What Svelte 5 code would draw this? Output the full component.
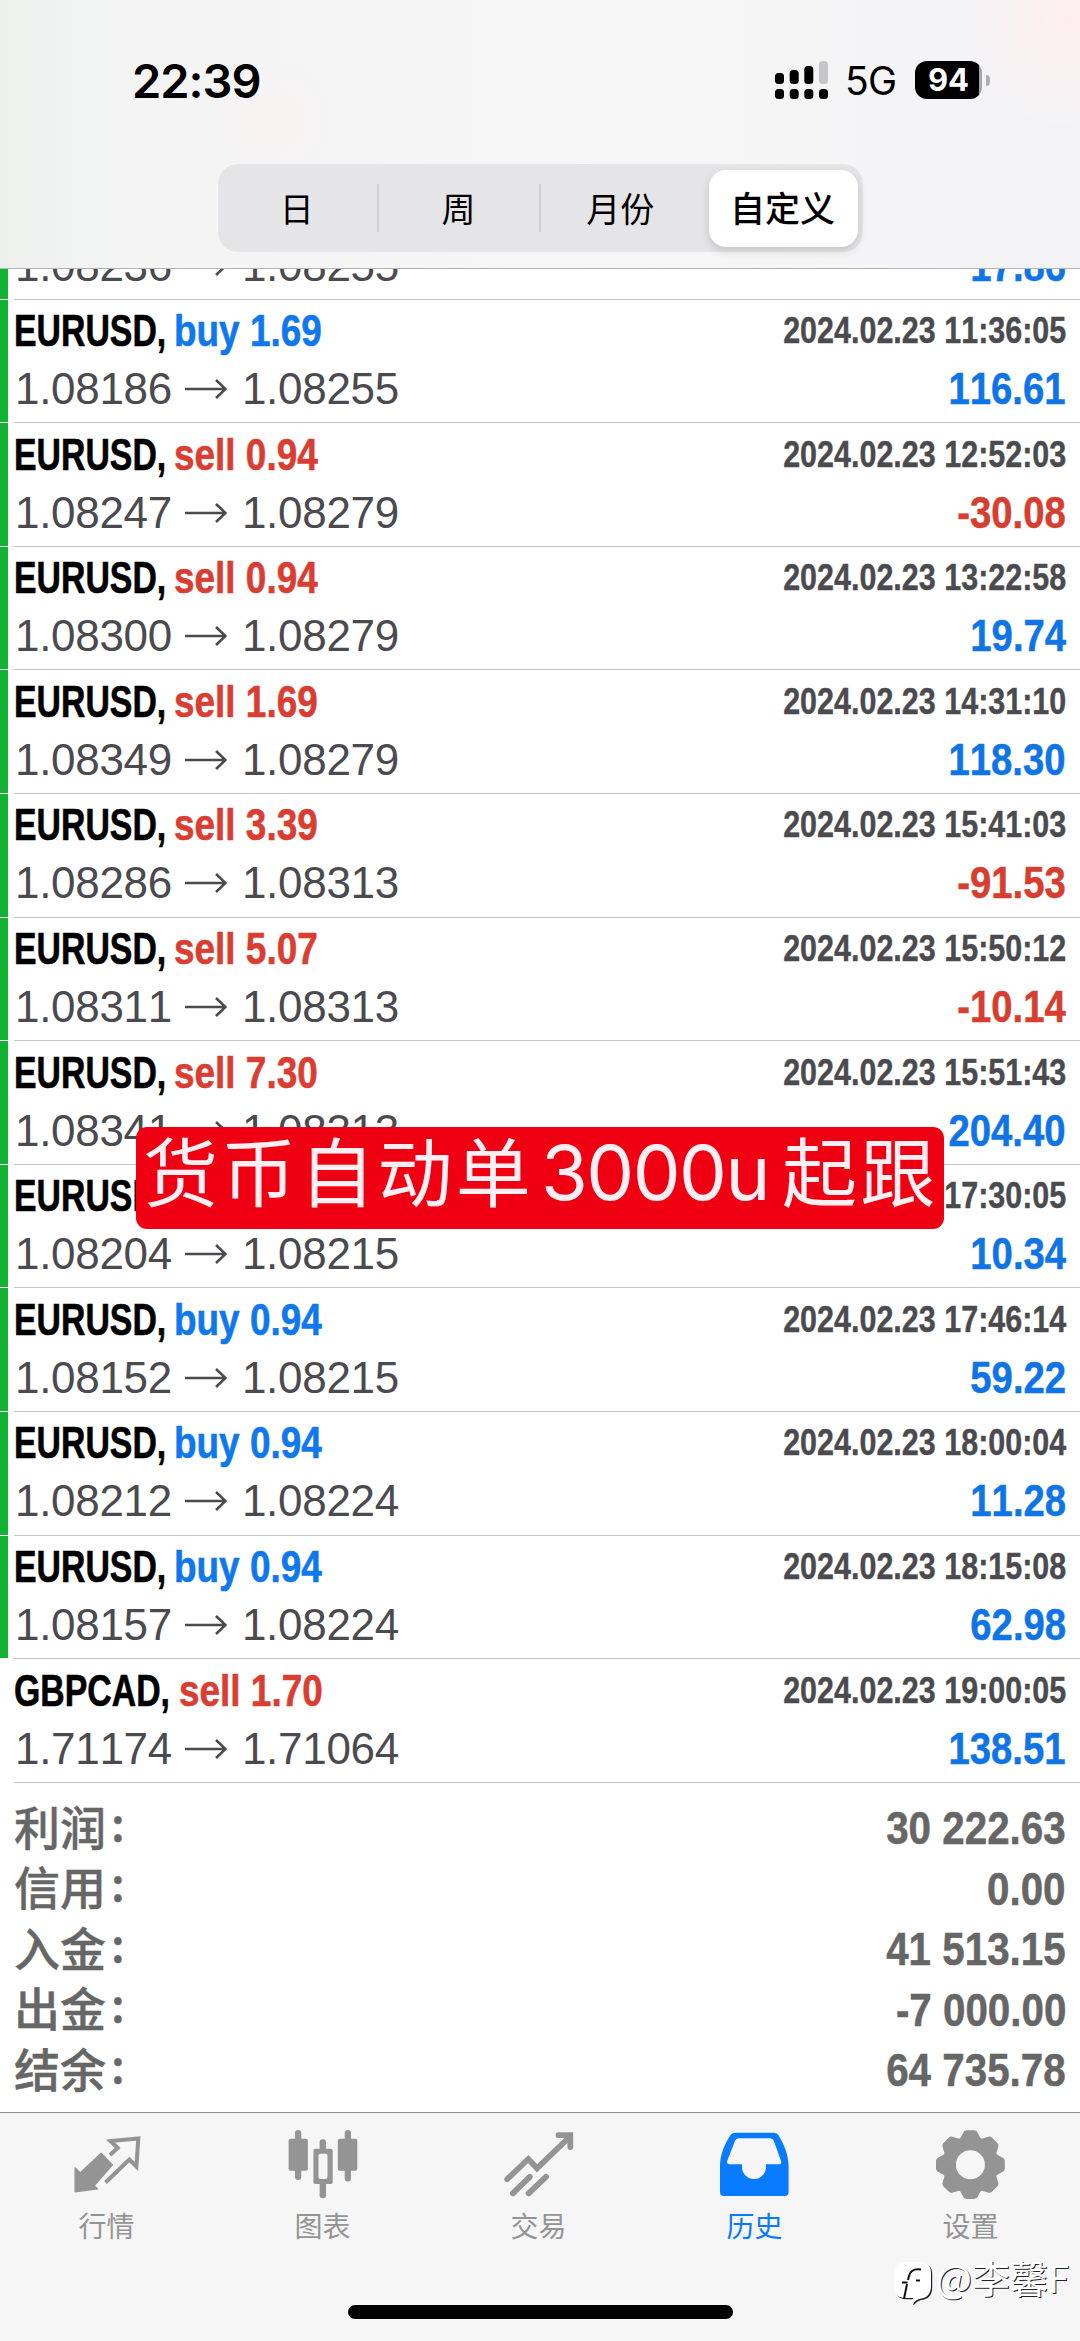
<script lang="ts">
	type Deal = {
		symbol: string;
		side: 'buy' | 'sell';
		volume: string;
		open: string;
		close: string;
		time: string;
		profit: string;
		marked?: boolean;
	};

	const periods = ['日', '周', '月份', '自定义'];
	let period = $state('自定义');

	function deal(
		symbol: string,
		side: 'buy' | 'sell',
		volume: string,
		open: string,
		close: string,
		time: string,
		profit: string,
		marked = true
	): Deal {
		return { symbol, side, volume, open, close, time: '2024.02.23 ' + time, profit, marked };
	}

	// scrolled halfway under the header, only its second line shows
	const clipped = { open: '1.08236', close: '1.08255', profit: '17.86' };

	const deals: Deal[] = [
		deal('EURUSD', 'buy', '1.69', '1.08186', '1.08255', '11:36:05', '116.61'),
		deal('EURUSD', 'sell', '0.94', '1.08247', '1.08279', '12:52:03', '-30.08'),
		deal('EURUSD', 'sell', '0.94', '1.08300', '1.08279', '13:22:58', '19.74'),
		deal('EURUSD', 'sell', '1.69', '1.08349', '1.08279', '14:31:10', '118.30'),
		deal('EURUSD', 'sell', '3.39', '1.08286', '1.08313', '15:41:03', '-91.53'),
		deal('EURUSD', 'sell', '5.07', '1.08311', '1.08313', '15:50:12', '-10.14'),
		deal('EURUSD', 'sell', '7.30', '1.08341', '1.08313', '15:51:43', '204.40'),
		deal('EURUSD', 'buy', '0.94', '1.08204', '1.08215', '17:30:05', '10.34'),
		deal('EURUSD', 'buy', '0.94', '1.08152', '1.08215', '17:46:14', '59.22'),
		deal('EURUSD', 'buy', '0.94', '1.08212', '1.08224', '18:00:04', '11.28'),
		deal('EURUSD', 'buy', '0.94', '1.08157', '1.08224', '18:15:08', '62.98'),
		deal('GBPCAD', 'sell', '1.70', '1.71174', '1.71064', '19:00:05', '138.51', false)
	];

	const summary = [
		{ label: '利润', value: '30 222.63' },
		{ label: '信用', value: '0.00' },
		{ label: '入金', value: '41 513.15' },
		{ label: '出金', value: '-7 000.00' },
		{ label: '结余', value: '64 735.78' }
	];

	const tabs = [
		{ id: 'quotes', label: '行情' },
		{ id: 'chart', label: '图表' },
		{ id: 'trade', label: '交易' },
		{ id: 'history', label: '历史' },
		{ id: 'settings', label: '设置' }
	];
	let activeTab = $state('history');

	const teeth = [0, 45, 90, 135, 180, 225, 270, 315];
</script>

{#snippet result(open: string, close: string, profit: string)}
	<div class="line">
		<div class="prices">
			<span>{open}</span>
			<svg width="42" height="20" viewBox="0 0 42 20">
				<path d="M0 10H40.5M31 1L40.5 10L31 19" />
			</svg>
			<span>{close}</span>
		</div>
		<span class="profit" class:loss={profit.startsWith('-')}>{profit}</span>
	</div>
{/snippet}

<main>
	<header>
		<div class="status">
			<span class="clock">22:39</span>
			<div class="status-right">
				<svg class="signal" width="54" height="38" viewBox="0 0 54 38">
					<rect x="0" y="12" width="9" height="11" rx="3.5" />
					<rect x="14.7" y="9" width="9" height="14" rx="3.5" />
					<rect x="29.3" y="5" width="9" height="18" rx="3.5" />
					<rect class="off" x="44" y="0" width="9" height="23" rx="3.5" />
					<rect x="0" y="28" width="9" height="10" rx="3.5" />
					<rect x="14.7" y="28" width="9" height="10" rx="3.5" />
					<rect x="29.3" y="28" width="9" height="10" rx="3.5" />
					<rect x="44" y="28" width="9" height="10" rx="3.5" />
				</svg>
				<span class="network">5G</span>
				<div class="battery"><span>94</span></div>
				<div class="battery-cap"></div>
			</div>
		</div>
		<div class="segmented">
			{#each periods as p (p)}
				<button class:selected={p === period} onclick={() => (period = p)}>{p}</button>
			{/each}
		</div>
	</header>

	<section class="deals">
		<article class="deal partial marked">
			{@render result(clipped.open, clipped.close, clipped.profit)}
		</article>
		{#each deals as d (d.time)}
			<article class="deal" class:marked={d.marked}>
				<div class="line">
					<div class="title">
						<span class="symbol">{d.symbol},</span>
						<span class="order {d.side}">{d.side} {d.volume}</span>
					</div>
					<span class="time">{d.time}</span>
				</div>
				{@render result(d.open, d.close, d.profit)}
			</article>
		{/each}
	</section>

	<section class="summary">
		{#each summary as row (row.label)}
			<div class="summary-row">
				<span class="label">{row.label}<i>:</i></span>
				<span class="amount">{row.value}</span>
			</div>
		{/each}
	</section>

	<nav>
		{#each tabs as tab (tab.id)}
			<button class="tab" class:active={tab.id === activeTab} onclick={() => (activeTab = tab.id)}>
				<svg width="72" height="72" viewBox="0 0 72 72">
					{#if tab.id === 'quotes'}
						<path
							class="fill round"
							d="M3.2 38L3.2 61.8L25.5 58.8L22 55.7L40.2 35L29.2 23.2L8.2 43Z"
						/>
						<path class="stroke" d="M38 25L45.7 18L38.5 11L66.3 8.4L64.4 36.5L57.3 29.5L33.5 52.5" />
					{:else if tab.id === 'chart'}
						<rect class="fill" x="0.6" y="8.7" width="19.3" height="32" rx="2" />
						<rect class="fill" x="7" y="0" width="6.3" height="50" rx="3" />
						<rect class="fill" x="49.8" y="8.7" width="19.5" height="32" rx="2" />
						<rect class="fill" x="56.7" y="0" width="6.3" height="51.5" rx="3" />
						<rect class="fill" x="31.6" y="9.3" width="6.4" height="13" rx="3" />
						<rect class="fill" x="31.6" y="50" width="6.4" height="18.3" rx="3" />
						<path
							class="fill"
							fill-rule="evenodd"
							d="M27.4 18.7H42.7Q44.7 18.7 44.7 20.7V52Q44.7 54 42.7 54H27.4Q25.4 54 25.4 52V20.7Q25.4 18.7 27.4 18.7ZM32.5 23.7Q30.5 23.7 30.5 25.7V47Q30.5 49 32.5 49H37.5Q39.5 49 39.5 47V25.7Q39.5 23.7 37.5 23.7Z"
						/>
					{:else if tab.id === 'trade'}
						<path
							class="stroke thick"
							d="M3.2 49.2L24.3 29L33 38.3L66 6.5M54.5 5.2H66.3V17M8.8 63.3L25.8 46.8M24.6 63.3L42 46.8"
						/>
					{:else if tab.id === 'history'}
						<path
							class="fill"
							fill-rule="evenodd"
							d="M14.5 2.7H54.5Q57 2.7 58.5 5.2C64 14 68.6 25 68.6 36V62Q68.6 66 64.6 66H4Q0 66 0 62V36C0 25 4.5 14 10.3 5.2Q12 2.7 14.5 2.7ZM18.5 8.3Q16 8.3 15 10.8L7.2 31Q6.3 34.3 9.5 34.3H22V37A12 12 0 0 0 46 37V34.3H59Q62 34.3 61 31L53.8 10.8Q53 8.3 50.2 8.3Z"
						/>
					{:else}
						<g transform="translate(34.4 34.7)">
							{#each teeth as angle (angle)}
								<path
									class="fill"
									transform="rotate({angle})"
									d="M-12 -24Q-9 -28 -7.5 -31.5Q-6.5 -34.4 -4 -34.4H4Q6.5 -34.4 7.5 -31.5Q9 -28 12 -24Z"
								/>
							{/each}
							<circle class="ring" r="21.2" />
						</g>
					{/if}
				</svg>
				<span>{tab.label}</span>
			</button>
		{/each}
	</nav>

	<div class="banner">
		<span>货币自动单</span><span class="latin">3000u</span><span>起跟</span>
	</div>
	<div class="home-indicator"></div>
	<div class="watermark">
		<svg width="42" height="46" viewBox="0 0 42 46">
			<path
				class="shade"
				d="M13 1H27Q38 1 38 12V25Q38 37 26 38Q23 39 19 43L20 37H13Q1 37 1 26V12Q1 1 13 1Z"
				transform="translate(1.2 1.2)"
			/>
			<path
				class="body"
				d="M13 1H27Q38 1 38 12V25Q38 37 26 38Q23 39 19 43L20 37H13Q1 37 1 26V12Q1 1 13 1Z"
			/>
			<path class="curve" d="M28 8.5Q18 7 16 15L15 19M9 21.5H14.5M23 19.5H27M14 23L11 38" />
		</svg>
		<span>@李馨F</span>
	</div>
</main>

<style>
	:global(body) {
		margin: 0;
		background: #fff;
	}

	main {
		position: relative;
		display: flex;
		flex-direction: column;
		width: 1080px;
		height: 2341px;
		overflow: hidden;
		background: #fff;
		font-family: 'Liberation Sans', 'Noto Sans CJK SC', sans-serif;
		font-kerning: none;
	}

	button {
		padding: 0;
		border: 0;
		background: none;
		font-family: 'Noto Sans CJK SC', sans-serif;
		color: inherit;
	}

	header {
		flex: none;
		box-sizing: border-box;
		height: 269px;
		border-bottom: 1px solid #b4b4b6;
		background:
			radial-gradient(circle at 1070px 20px, #fdeeee 0, transparent 110px),
			radial-gradient(circle at 275px 120px, #f8f2f2 0, transparent 60px),
			linear-gradient(90deg, #eef0ee 0, #f4f4f5 12%, #f6f6f6 60%, #f3f3f6 100%);
	}

	.status {
		display: flex;
		justify-content: space-between;
		align-items: center;
		height: 160px;
		padding: 0 90px 0 132px;
		box-sizing: border-box;
		font-family: Inter, sans-serif;
	}

	.clock {
		font-size: 47px;
		font-weight: 600;
		letter-spacing: -1px;
	}

	.status-right {
		display: flex;
		align-items: center;
	}

	.signal .off {
		fill: #c6c6c8;
	}

	.network {
		margin-left: 16px;
		width: 70px;
		font-size: 39px;
		line-height: 42px;
		letter-spacing: -0.8px;
		transform: translateY(1px);
	}

	.battery {
		width: 67px;
		height: 38px;
		border-radius: 12px;
		background: linear-gradient(90deg, #000 64px, #a5a5a7 64px);
		color: #fff;
		font-size: 31px;
		font-weight: 700;
		line-height: 38px;
		text-align: center;
	}

	.battery-cap {
		width: 4px;
		height: 11px;
		margin-left: 4px;
		border-radius: 0 5px 5px 0;
		background: #b0b0b2;
	}

	.segmented {
		display: flex;
		align-items: center;
		width: 645px;
		height: 88px;
		margin: 4px auto 0;
		border-radius: 20px;
		background: #e5e5e7;
	}

	.segmented button {
		flex: 1;
		height: 48px;
		padding-right: 1px;
		font-size: 34px;
		line-height: 44px;
	}

	.segmented button + button {
		border-left: 2px solid #cfcfd2;
	}

	.segmented .selected,
	.segmented button + .selected {
		flex: none;
		width: 149px;
		height: 77px;
		margin: 0 5px 0 8px;
		padding-bottom: 3px;
		border: 0;
		border-radius: 17px;
		background: #fff;
		box-shadow: 0 4px 10px rgb(0 0 0 / 0.14);
		font-size: 35px;
		font-weight: 500;
	}

	.deals {
		flex: none;
		display: flex;
		flex-direction: column;
		height: 1514px;
		overflow: hidden;
	}

	.deal {
		flex: none;
		position: relative;
		box-sizing: border-box;
		display: flex;
		flex-direction: column;
		gap: 8px;
		height: 123.62px;
		padding: 6.5px 14px 0 15px;
	}

	.deal::after {
		content: '';
		position: absolute;
		right: 0;
		bottom: 0;
		left: 14px;
		height: 1px;
		background: #c4c4c6;
	}

	.partial {
		justify-content: flex-end;
		height: 30.5px;
		padding-bottom: 9px;
	}

	.marked::before {
		content: '';
		position: absolute;
		top: 0;
		bottom: 1px;
		left: 0;
		width: 8px;
		background: #12b232;
	}

	.line {
		flex: none;
		display: flex;
		justify-content: space-between;
		height: 50px;
		line-height: 50px;
		white-space: nowrap;
	}

	.title {
		display: flex;
		font-size: 44.5px;
		font-weight: 700;
		-webkit-text-stroke: 0.6px currentColor;
	}

	.symbol {
		margin-left: -1px;
		margin-right: -0.895em;
		transform: scaleX(0.76);
		transform-origin: left;
	}

	.order {
		transform: scaleX(0.83);
		transform-origin: left;
	}

	.buy {
		color: #0f78ec;
	}

	.sell {
		color: #da3d31;
	}

	.time {
		color: #4b4b4f;
		font-size: 36px;
		font-weight: 700;
		transform: scaleX(0.847);
		transform-origin: right;
		-webkit-text-stroke: 0.4px currentColor;
	}

	.prices {
		display: flex;
		align-items: center;
		color: #4b4b4f;
		font-size: 44px;
		letter-spacing: -0.3px;
	}

	.prices svg {
		margin: 0 15px 0 13px;
		fill: none;
		stroke: #4b4b4f;
		stroke-width: 2.6;
	}

	.profit {
		color: #0f74e6;
		font-size: 44px;
		font-weight: 700;
		transform: scaleX(0.87);
		transform-origin: right;
		-webkit-text-stroke: 0.5px currentColor;
	}

	.loss {
		color: #d63e30;
	}

	.summary {
		flex: 1;
		padding: 15px 14px 0 14px;
		color: #666;
	}

	.summary-row {
		display: flex;
		justify-content: space-between;
		height: 60.5px;
		line-height: 60.5px;
	}

	.label {
		margin-top: -3.5px;
		font-family: 'Noto Sans CJK SC', sans-serif;
		font-size: 46px;
		font-weight: 500;
		-webkit-text-stroke: 0.4px currentColor;
	}

	.label i {
		position: relative;
		top: -4px;
		margin-left: 5px;
		font-style: normal;
	}

	.amount {
		font-size: 46px;
		font-weight: 700;
		transform: scaleX(0.877);
		transform-origin: right;
		-webkit-text-stroke: 0.5px currentColor;
	}

	nav {
		flex: none;
		display: flex;
		box-sizing: border-box;
		height: 229px;
		padding-top: 17px;
		border-top: 1px solid #8f8f92;
		background: #f6f6f6;
	}

	.tab {
		flex: 1;
		display: flex;
		flex-direction: column;
		align-items: center;
		color: #949494;
		font-size: 28px;
		line-height: 40px;
	}

	.tab span {
		margin: 3px 3px 0 0;
	}

	.tab.active {
		color: #087bfe;
	}

	.fill {
		fill: currentColor;
	}

	.round {
		stroke: currentColor;
		stroke-width: 1.5;
		stroke-linejoin: round;
	}

	.stroke {
		fill: none;
		stroke: currentColor;
		stroke-width: 4;
	}

	.thick {
		stroke-width: 5.8;
		stroke-linecap: round;
	}

	.ring {
		fill: #f6f6f6;
		stroke: currentColor;
		stroke-width: 13.4;
	}

	.banner {
		position: absolute;
		top: 1127px;
		left: 136px;
		display: flex;
		box-sizing: border-box;
		width: 808px;
		height: 102px;
		padding-left: 7px;
		border-radius: 11px;
		background: #ee0012;
		color: #ffeef2;
		font-family: 'Noto Sans CJK SC', sans-serif;
		font-size: 75px;
		line-height: 84px;
		letter-spacing: 3.2px;
		white-space: nowrap;
	}

	.banner .latin {
		width: 241px;
		margin-left: 7px;
		font-family: Inter, sans-serif;
		font-size: 76px;
		font-weight: 400;
		line-height: 90px;
		letter-spacing: -1.6px;
	}

	.home-indicator {
		position: absolute;
		top: 2305px;
		left: 348px;
		width: 385px;
		height: 14px;
		border-radius: 7px;
		background: #000;
	}

	.watermark {
		position: absolute;
		top: 2261px;
		left: 893px;
		display: flex;
		gap: 1px;
		color: #fff;
		font-family: 'Noto Sans CJK SC', sans-serif;
		font-size: 38px;
		font-weight: 400;
		line-height: 32px;
		text-shadow: 1px 1px 0.5px #222;
		white-space: nowrap;
	}

	.watermark .shade {
		fill: #222;
	}

	.watermark .body {
		fill: #fff;
	}

	.watermark .curve {
		fill: none;
		stroke: #111;
		stroke-width: 2;
	}
</style>
